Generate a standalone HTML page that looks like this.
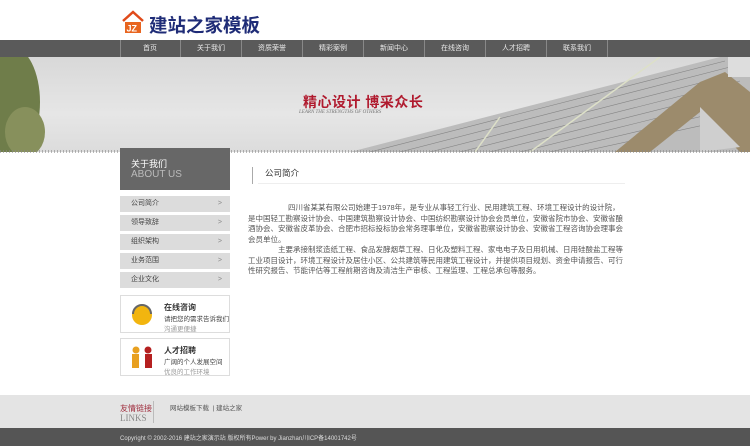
<!DOCTYPE html><html><head><meta charset="utf-8"><style>
*{margin:0;padding:0;box-sizing:border-box}
body{width:750px;height:446px;overflow:hidden;background:#fff;font-family:"Liberation Sans","Noto Sans CJK SC",sans-serif;position:relative}
.abs{position:absolute}
.nav{top:40px;left:0;width:750px;height:17px;background:#5a5a5a}
.nav span{position:absolute;top:0;height:17px;line-height:17px;width:61px;text-align:center;color:#e8e8e8;font-size:7px;border-right:1px solid #888}
.menu div{position:absolute;left:120px;width:110px;height:16px;background:#dcdcdc;font-size:7px;color:#444;line-height:16px;padding-left:11px}
.menu div:after{content:">";position:absolute;right:8px;color:#888}
.box{left:120px;width:110px;height:38px;border:1px solid #ddd;background:#fff}
.box b{position:absolute;left:43px;top:6px;font-size:8px;color:#333}
.box i{position:absolute;left:43px;font-style:normal;font-size:6.5px;color:#444}
p.t{font-size:7.5px;line-height:10.5px;color:#555;text-indent:30px}
</style></head><body>
<div class="abs" style="left:121px;top:9px;width:24px;height:24px">
<svg width="26" height="26"><path d="M2 12 L12 3 L22 12" stroke="#e04a1a" stroke-width="2.5" fill="none"/><rect x="4" y="13" width="16" height="11" fill="#e8651f"/><text x="5.5" y="22.5" font-size="9" fill="#fff" font-family="Liberation Sans" font-weight="bold">JZ</text></svg></div>
<div class="abs" style="left:149px;top:12px;font-size:18.5px;color:#1f2c77;font-weight:bold">建站之家模板</div>
<div class="abs nav">
<span style="left:120px">首页</span><span style="left:181px">关于我们</span><span style="left:242px">资质荣誉</span><span style="left:303px">精彩案例</span><span style="left:364px">新闻中心</span><span style="left:425px">在线咨询</span><span style="left:486px">人才招聘</span><span style="left:547px">联系我们</span><span style="left:120px;width:1px;border-right:1px solid #888"></span>
</div>
<div class="abs" style="top:57px;left:0;width:750px;height:95px;background:linear-gradient(#d8d8d8,#e6e6e6 60%,#dcdcdc);overflow:hidden">
<svg width="750" height="95">
<ellipse cx="12" cy="45" rx="28" ry="55" fill="#6f7d4a"/><ellipse cx="25" cy="75" rx="20" ry="25" fill="#87905c"/>
<polygon points="350,95 720,0 750,0 750,95" fill="#bcbcbc"/>
<g stroke="#555" stroke-width="0.6" opacity="0.55">
<line x1="370" y1="95" x2="725" y2="4"/><line x1="400" y1="95" x2="730" y2="10"/><line x1="430" y1="95" x2="735" y2="17"/><line x1="460" y1="95" x2="740" y2="24"/><line x1="490" y1="95" x2="745" y2="31"/><line x1="520" y1="95" x2="750" y2="38"/><line x1="550" y1="95" x2="750" y2="48"/><line x1="580" y1="95" x2="750" y2="58"/>
</g>
<line x1="475" y1="95" x2="500" y2="60" stroke="#dde0c8" stroke-width="1.5"/>
<line x1="530" y1="95" x2="660" y2="0" stroke="#dde0c8" stroke-width="1.5"/>
<polygon points="615,95 700,25 725,15 750,35 750,95 740,95 700,55 650,95" fill="#9c8b6c"/>
<polygon points="700,50 740,90 700,95" fill="#cfcfcf"/>
<rect x="728" y="0" width="22" height="20" fill="#ddd"/>
</svg>
<div class="abs" style="left:303px;top:35px;font-size:14px;font-weight:bold;color:#b01a2e;letter-spacing:0.5px">精心设计 博采众长</div>
<div class="abs" style="left:299px;top:53px;font-size:5px;color:#777;font-style:italic;font-family:'Liberation Serif',serif">LEARN THE STRENGTHS OF OTHERS</div>
</div>
<div class="abs" style="top:150px;left:0;width:750px;height:3px;background:repeating-linear-gradient(90deg,#888 0 1px,transparent 1px 3px);opacity:.6"></div>
<div class="abs" style="left:120px;top:148px;width:110px;height:42px;background:#676767"><div style="position:absolute;left:11px;top:9px;font-size:9px;color:#fff">关于我们</div><div style="position:absolute;left:11px;top:21px;font-size:10px;color:#bbb">ABOUT US</div></div>
<div class="menu"><div style="top:196px">公司简介</div><div style="top:215px">领导致辞</div><div style="top:234px">组织架构</div><div style="top:253px">业务范围</div><div style="top:272px">企业文化</div></div>
<div class="abs box" style="top:295px"><svg class="abs" style="left:6px;top:4px" width="30" height="30"><circle cx="15" cy="15" r="10" fill="#f2b50f"/><path d="M6 14 A9 9 0 0 1 24 14" stroke="#666" stroke-width="2" fill="none"/></svg><b>在线咨询</b><i style="top:17px">请把您的需求告诉我们</i><i style="top:27px;color:#999">沟通更便捷</i></div>
<div class="abs box" style="top:338px"><svg class="abs" style="left:6px;top:4px" width="30" height="30"><circle cx="9" cy="7" r="3.5" fill="#e8a020"/><rect x="5" y="11" width="7" height="14" fill="#e8a020"/><circle cx="21" cy="7" r="3.5" fill="#b52020"/><rect x="18" y="11" width="7" height="14" fill="#b52020"/></svg><b>人才招聘</b><i style="top:17px">广阔的个人发展空间</i><i style="top:27px;color:#999">优良的工作环境</i></div>
<div class="abs" style="left:252px;top:167px;width:1px;height:17px;background:#aaa"></div>
<div class="abs" style="left:265px;top:167px;font-size:8.5px;color:#333">公司简介</div>
<div class="abs" style="left:258px;top:183px;width:367px;height:1px;background:#eee"></div>
<div class="abs" style="left:248px;top:203px;width:378px">
<p class="t" style="text-indent:40px">四川省某某有限公司始建于1978年，是专业从事轻工行业、民用建筑工程、环境工程设计的设计院，是中国轻工勘察设计协会、中国建筑勘察设计协会、中国纺织勘察设计协会会员单位，安徽省院市协会、安徽省酿酒协会、安徽省皮革协会、合肥市招标投标协会常务理事单位，安徽省勘察设计协会、安徽省工程咨询协会理事会会员单位。</p>
<p class="t">主要承接制浆造纸工程、食品发酵烟草工程、日化及塑料工程、家电电子及日用机械、日用硅酸盐工程等工业项目设计，环境工程设计及居住小区、公共建筑等民用建筑工程设计，并提供项目规划、资金申请报告、可行性研究报告、节能评估等工程前期咨询及清洁生产审核、工程监理、工程总承包等服务。</p>
</div>
<div class="abs" style="top:395px;left:0;width:750px;height:33px;background:#e4e4e4">
<div class="abs" style="left:120px;top:8px;font-size:8px;color:#a03040">友情链接</div>
<div class="abs" style="left:120px;top:18px;font-size:9px;color:#888;font-family:'Liberation Serif',serif">LINKS</div>
<div class="abs" style="left:153px;top:6px;width:4px;height:22px;border-left:1px solid #bbb"></div>
<div class="abs" style="left:170px;top:7px;font-size:6.5px;color:#555">网站模板下载 &nbsp;| 建站之家</div>
</div>
<div class="abs" style="top:428px;left:0;width:750px;height:18px;background:#555"><div class="abs" style="left:120px;top:5px;font-size:6px;color:#ddd">Copyright © 2002-2016 建站之家演示站 版权所有Power by Jianzhan川ICP备14001742号</div></div>
</body></html>
